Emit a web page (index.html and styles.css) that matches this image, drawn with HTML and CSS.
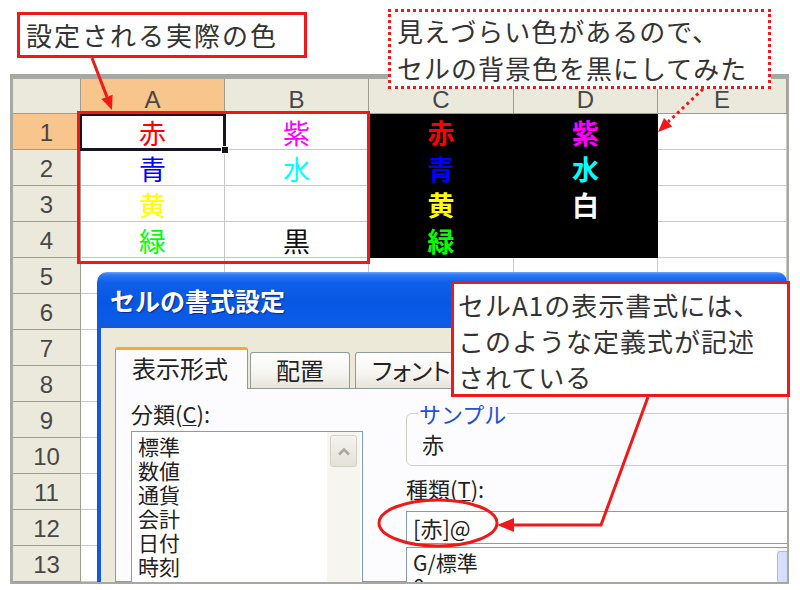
FILE: index.html
```html
<!DOCTYPE html>
<html lang="ja">
<head>
<meta charset="utf-8">
<title>セルの書式設定</title>
<link rel="stylesheet" href="styles.css">
</head>
<body>
<div class="page">
  <div class="sheet">
    <div class="grid">
      <div class="h corner"></div>
      <div class="h col sel">A</div>
      <div class="h col">B</div>
      <div class="h col">C</div>
      <div class="h col">D</div>
      <div class="h col">E</div>

      <div class="h row sel">1</div>
      <div class="c cur t-red">赤</div>
      <div class="c t-magenta">紫</div>
      <div class="c blk t-red">赤</div>
      <div class="c blk t-magenta">紫</div>
      <div class="c"></div>

      <div class="h row">2</div>
      <div class="c t-blue">青</div>
      <div class="c t-cyan">水</div>
      <div class="c blk t-blue">青</div>
      <div class="c blk t-cyan">水</div>
      <div class="c"></div>

      <div class="h row">3</div>
      <div class="c t-yellow">黄</div>
      <div class="c"></div>
      <div class="c blk t-yellow">黄</div>
      <div class="c blk t-white">白</div>
      <div class="c"></div>

      <div class="h row">4</div>
      <div class="c t-green">緑</div>
      <div class="c t-black">黒</div>
      <div class="c blk t-green">緑</div>
      <div class="c blk"></div>
      <div class="c"></div>

      <div class="h row">5</div><div class="c"></div><div class="c"></div><div class="c"></div><div class="c"></div><div class="c"></div>
      <div class="h row">6</div><div class="c"></div><div class="c"></div><div class="c"></div><div class="c"></div><div class="c"></div>
      <div class="h row">7</div><div class="c"></div><div class="c"></div><div class="c"></div><div class="c"></div><div class="c"></div>
      <div class="h row">8</div><div class="c"></div><div class="c"></div><div class="c"></div><div class="c"></div><div class="c"></div>
      <div class="h row">9</div><div class="c"></div><div class="c"></div><div class="c"></div><div class="c"></div><div class="c"></div>
      <div class="h row">10</div><div class="c"></div><div class="c"></div><div class="c"></div><div class="c"></div><div class="c"></div>
      <div class="h row">11</div><div class="c"></div><div class="c"></div><div class="c"></div><div class="c"></div><div class="c"></div>
      <div class="h row">12</div><div class="c"></div><div class="c"></div><div class="c"></div><div class="c"></div><div class="c"></div>
      <div class="h row">13</div><div class="c"></div><div class="c"></div><div class="c"></div><div class="c"></div><div class="c"></div>
    </div>
    <div class="range-mark"></div>
  </div>

  <div class="dialog">
    <div class="titlebar">セルの書式設定</div>
    <div class="dbody">
      <div class="tabs">
        <div class="tab active">表示形式</div>
        <div class="tab second">配置</div>
        <div class="tab third">フォント</div>
      </div>
      <div class="panel">
        <div class="leftcol">
          <div class="lbl">分類(<u>C</u>):</div>
          <div class="listbox">
            <div class="items">
              <div>標準</div>
              <div>数値</div>
              <div>通貨</div>
              <div>会計</div>
              <div>日付</div>
              <div>時刻</div>
              <div>パーセンテージ</div>
            </div>
            <div class="vscroll">
              <div class="upbtn">
                <svg width="14" height="9" viewBox="0 0 14 9"><path d="M2 7.5 L7 2.5 L12 7.5" fill="none" stroke="#a9a89e" stroke-width="2.6"/></svg>
              </div>
            </div>
          </div>
        </div>
        <div class="rightcol">
          <div class="group">
            <div class="group-label">サンプル</div>
            <div class="sample">赤</div>
          </div>
          <div class="lbl kind">種類(<u>T</u>):</div>
          <div class="input">[赤]@</div>
          <div class="fmtlist">
            <div class="items">
              <div>G/標準</div>
              <div>0</div>
            </div>
            <div class="vscroll2"><div class="btn2"></div></div>
          </div>
        </div>
      </div>
    </div>
  </div>

  <div class="callout c1">設定される実際の色</div>
  <div class="callout c2">見えづらい色があるので、<br>セルの背景色を黒にしてみた</div>
  <div class="callout c3">セルA1の表示書式には、<br>このような定義式が記述<br>されている</div>

  <svg class="annot" width="800" height="590" viewBox="0 0 800 590">
    <g stroke="#f01818" stroke-width="3" fill="none">
      <line x1="92" y1="58" x2="107" y2="97"/>
      <line x1="703" y1="89" x2="668" y2="122" stroke-dasharray="3 3.5"/>
      <polyline points="648,397 601,525 512,525" stroke-linejoin="miter"/>
      <ellipse cx="438" cy="523" rx="59" ry="23"/>
    </g>
    <g fill="#f01818">
      <polygon points="112,110 101.4,99 112.6,94.8"/>
      <polygon points="658,132 672.3,126.6 664,118"/>
      <polygon points="497,525 514,518 514,532"/>
    </g>
  </svg>
</div>
</body>
</html>
```
FILE: styles.css
```css
html, body {
  margin: 0;
  padding: 0;
  background: #ffffff;
}

body {
  font-family: "Noto Sans CJK JP", "Noto Sans", sans-serif;
  overflow: hidden;
}

.page {
  position: relative;
  width: 800px;
  height: 590px;
  box-sizing: border-box;
  padding: 74px 0 0 10px;
  overflow: hidden;
}

/* ---------- spreadsheet ---------- */
.sheet {
  position: relative;
  width: 774px;
  border-top: 5px solid #a8a8a3;
  border-left: 3px solid #a8a8a3;
  border-right: 2px solid #a8a8a3;
  border-bottom: 2px solid #a8a8a3;
}

.grid {
  display: grid;
  grid-template-columns: 68px 144px 144px 145px 144px 129px;
  grid-template-rows: 35px repeat(13, 36px);
}

.grid > div {
  box-sizing: border-box;
  border-right: 1px solid #c8c8c8;
  border-bottom: 1px solid #c8c8c8;
  display: flex;
  align-items: center;
  justify-content: center;
}

.h {
  background: #ebe9dc;
  border-color: #9f9d90 !important;
  font-family: "Liberation Sans", Arial, sans-serif;
  font-size: 24px;
  color: #474747;
}

.h.col {
  padding-top: 7px;
}

.h.row {
  padding-top: 3px;
}

.h.sel {
  background: #f8c58d;
}

.c {
  background: #ffffff;
  font-size: 27px;
  line-height: 36px;
  padding-top: 2px;
}

.c.blk {
  background: #000000;
  border-color: #000000 !important;
  font-weight: bold;
}

.t-red { color: #ff0000; }
.t-magenta { color: #ff00ff; }
.t-blue { color: #0000ff; }
.t-cyan { color: #00ffff; }
.t-yellow { color: #ffff00; }
.t-green { color: #00ff00; }
.t-white { color: #ffffff; }
.t-black { color: #111111; }

.cur {
  position: relative;
}

.cur::after {
  content: "";
  position: absolute;
  left: -1px;
  top: 0;
  right: -2px;
  bottom: -2px;
  border: 3px solid #151525;
  border-left-width: 2px;
  border-top-width: 2px;
}

.cur::before {
  content: "";
  position: absolute;
  right: -5px;
  bottom: -5px;
  width: 6px;
  height: 6px;
  background: #151515;
  border: 1px solid #ffffff;
  z-index: 1;
}

.range-mark {
  position: absolute;
  left: 64px;
  top: 32px;
  width: 293px;
  height: 153px;
  box-sizing: border-box;
  border: 3px solid #f01818;
}

/* ---------- dialog ---------- */
.dialog {
  position: absolute;
  left: 97px;
  top: 272px;
  width: 690px;
  height: 310px;
  overflow: hidden;
  border-radius: 10px 10px 0 0;
  z-index: 2;
}

.titlebar {
  height: 56px;
  background: linear-gradient(to bottom, #6aa6fb 0, #2f78f2 5%, #0f5fe9 18%, #0757e4 55%, #0a5ce8 85%, #1458dc 100%);
  color: #ffffff;
  font-weight: bold;
  font-size: 25px;
  line-height: 56px;
  padding-left: 13px;
  text-shadow: 1px 1px 1px #0c2a90;
  white-space: nowrap;
}

.dbody {
  height: 254px;
  box-sizing: border-box;
  background: #ece9d8;
  border-left: 4px solid #1258e0;
  padding: 19px 0 0 14px;
}

.tabs {
  display: flex;
  align-items: flex-end;
  height: 41px;
}

.tab {
  box-sizing: border-box;
  border: 1px solid #919b9c;
  border-bottom: none;
  border-radius: 3px 3px 0 0;
  font-size: 24px;
  color: #222222;
  white-space: nowrap;
}

.tab.active {
  width: 133px;
  height: 42px;
  margin-bottom: -1px;
  background: #fcfcfe;
  border-top: 3px solid #f5a83c;
  padding-left: 16px;
  line-height: 36px;
  position: relative;
  z-index: 1;
}

.tab.second {
  width: 100px;
  height: 36px;
  margin-left: 2px;
  text-align: center;
  line-height: 34px;
  background: linear-gradient(to bottom, #ffffff 0, #f5f4ef 60%, #e6e4da 100%);
}

.tab.third {
  width: 140px;
  height: 36px;
  margin-left: 5px;
  padding-left: 16px;
  line-height: 34px;
  font-feature-settings: "palt";
  background: linear-gradient(to bottom, #ffffff 0, #f5f4ef 60%, #e6e4da 100%);
}

.panel {
  width: 700px;
  height: 194px;
  box-sizing: border-box;
  border: 1px solid #919b9c;
  background: #fcfcfe;
  display: flex;
}

.leftcol {
  padding-left: 15px;
  width: 232px;
  flex: none;
}

.lbl {
  font-size: 22px;
  line-height: 26px;
  margin-top: 11px;
  color: #222222;
  white-space: nowrap;
}

.lbl u {
  text-decoration-thickness: 1px;
  text-underline-offset: 2px;
}

.listbox {
  margin-top: 5px;
  width: 232px;
  height: 200px;
  box-sizing: border-box;
  border: 1px solid #7f9db9;
  background: #ffffff;
  display: flex;
}

.items {
  flex: 1;
  padding: 2px 0 0 6px;
  font-size: 21px;
  line-height: 24px;
  color: #222222;
  white-space: nowrap;
  overflow: hidden;
}

.vscroll {
  width: 33px;
  margin-right: 2px;
  background: #f6f5f0;
  flex: none;
}

.upbtn {
  margin: 3px 3px 0 3px;
  height: 32px;
  box-sizing: border-box;
  border: 1px solid #d4d2c6;
  border-radius: 3px;
  background: linear-gradient(to bottom, #f4f3ee, #e3e1d7);
  display: flex;
  align-items: center;
  justify-content: center;
}

.rightcol {
  margin-left: 43px;
  width: 400px;
  flex: none;
}

.group {
  margin-top: 24px;
  height: 53px;
  box-sizing: border-box;
  border: 1px solid #d0d0bf;
  border-radius: 6px;
  padding-left: 11px;
}

.group-label {
  display: block;
  width: max-content;
  margin-top: -14px;
  padding: 0 1px;
  background: #fcfcfe;
  font-size: 22px;
  line-height: 26px;
  color: #2250d8;
}

.sample {
  margin: 4px 0 0 4px;
  font-size: 22px;
  line-height: 26px;
  color: #222222;
}

.lbl.kind {
  margin-top: 9px;
}

.input {
  margin-top: 10px;
  height: 33px;
  box-sizing: border-box;
  border: 1px solid #7f9db9;
  background: #ffffff;
  padding-left: 6px;
  font-size: 22px;
  line-height: 31px;
  color: #222222;
}

.fmtlist {
  margin-top: 3px;
  height: 60px;
  box-sizing: border-box;
  border: 1px solid #7f9db9;
  background: #ffffff;
  display: flex;
}

.vscroll2 {
  width: 28px;
  flex: none;
  background: #f6f5f0;
}

.btn2 {
  margin-top: 3px;
  height: 32px;
  box-sizing: border-box;
  border: 1px solid #a7b9e4;
  border-radius: 3px;
  background: linear-gradient(to right, #d8e3fb, #c2d2f6);
}

/* ---------- annotations ---------- */
.callout {
  position: absolute;
  box-sizing: border-box;
  background: #ffffff;
  color: #333333;
  font-size: 26px;
  white-space: nowrap;
  z-index: 3;
}

.c1 {
  left: 17px;
  top: 12px;
  width: 290px;
  height: 46px;
  border: 3px solid #f01818;
  padding-left: 6px;
  line-height: 40px;
  letter-spacing: 2px;
}

.c2 {
  left: 388px;
  top: 9px;
  width: 383px;
  height: 80px;
  border: 3px dotted #f01818;
  padding-left: 6px;
  line-height: 37px;
  letter-spacing: 1px;
}

.c3 {
  left: 451px;
  top: 281px;
  width: 339px;
  height: 116px;
  border: 3px solid #f01818;
  padding: 3px 0 0 4px;
  line-height: 36px;
  letter-spacing: 1px;
}

.annot {
  position: absolute;
  left: 0;
  top: 0;
  z-index: 4;
  pointer-events: none;
}
```
